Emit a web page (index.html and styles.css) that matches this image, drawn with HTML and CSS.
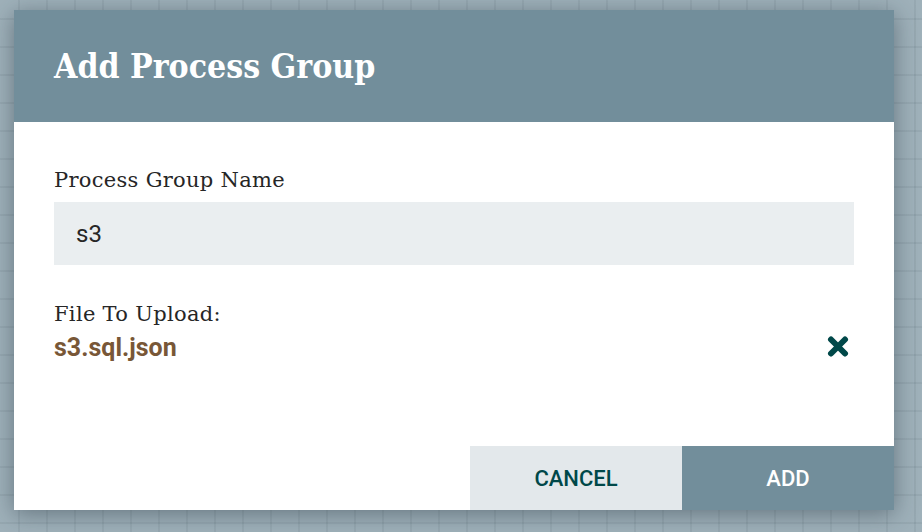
FILE: index.html
```html
<!DOCTYPE html>
<html lang="en">
<head>
    <meta charset="UTF-8">
    <title>Add Process Group</title>
    <link rel="stylesheet" href="styles.css">
</head>
<body>
<div class="dialog">
    <div class="dialog-header">
        <span class="dialog-title">Add Process Group</span>
    </div>
    <div class="dialog-content">
        <div class="setting-name">Process Group Name</div>
        <div class="setting-field">
            <input type="text" class="pg-name" value="s3">
        </div>
        <div class="setting-name upload-label">File To Upload:</div>
        <div class="upload-row">
            <span class="upload-file">s3.sql.json</span>
            <span class="upload-clear" title="Remove">
                <svg width="22" height="21" viewBox="0 0 22 21">
                    <path d="M4 3.5 L18 17.5 M18 3.5 L4 17.5" stroke="#004849" stroke-width="6" stroke-linecap="round"/>
                </svg>
            </span>
        </div>
    </div>
    <div class="dialog-buttons">
        <div class="button secondary">CANCEL</div>
        <div class="button primary">ADD</div>
    </div>
</div>
</body>
</html>
```

FILE: styles.css
```css
* {
    margin: 0;
    padding: 0;
    box-sizing: border-box;
}

body {
    width: 922px;
    height: 532px;
    overflow: hidden;
    background-color: #9fb1ba;
    background-image:
        linear-gradient(to right, rgba(60, 80, 90, 0.09) 2px, transparent 2px),
        linear-gradient(to bottom, rgba(60, 80, 90, 0.09) 2px, transparent 2px);
    background-size: 28px 28px;
    background-position: 18px 18px;
    padding: 10px 0 0 14px;
}

.dialog {
    width: 880px;
    height: 500px;
    background: #fff;
    display: flex;
    flex-direction: column;
    box-shadow: 0 4px 22px rgba(30, 45, 55, 0.45);
}

.dialog-header {
    height: 112px;
    background: #728e9b;
    display: flex;
    align-items: center;
    padding-left: 40px;
}

.dialog-title {
    font-family: "DejaVu Serif Condensed", "DejaVu Serif", serif;
    font-stretch: condensed;
    font-weight: bold;
    font-size: 33.5px;
    color: #fff;
}

.dialog-content {
    flex: 1;
    padding: 46px 40px 0 40px;
}

.setting-name {
    font-family: "DejaVu Serif", serif;
    font-size: 21px;
    line-height: 24px;
    letter-spacing: 0.3px;
    color: #262626;
}

.setting-field {
    margin-top: 10px;
}

.pg-name {
    display: block;
    width: 100%;
    height: 63px;
    border: 0;
    outline: none;
    background: #eaeef0;
    padding: 0 22px;
    font-family: Roboto, sans-serif;
    font-size: 24px;
    color: #262626;
}

.upload-label {
    margin-top: 37px;
}

.upload-row {
    display: flex;
    align-items: center;
    justify-content: space-between;
    margin-top: 7px;
    padding-right: 5px;
}

.upload-file {
    font-family: Roboto, sans-serif;
    font-weight: bold;
    font-size: 25px;
    line-height: 30px;
    color: #785737;
}

.upload-clear {
    display: flex;
    margin-bottom: 4px;
}

.dialog-buttons {
    display: flex;
    justify-content: flex-end;
}

.button {
    width: 212px;
    height: 64px;
    display: flex;
    align-items: center;
    justify-content: center;
    font-family: Roboto, sans-serif;
    font-weight: 500;
    font-size: 22px;
}

.secondary {
    background: #e3e8eb;
    color: #004849;
}

.primary {
    background: #728e9b;
    color: #fff;
}
```
